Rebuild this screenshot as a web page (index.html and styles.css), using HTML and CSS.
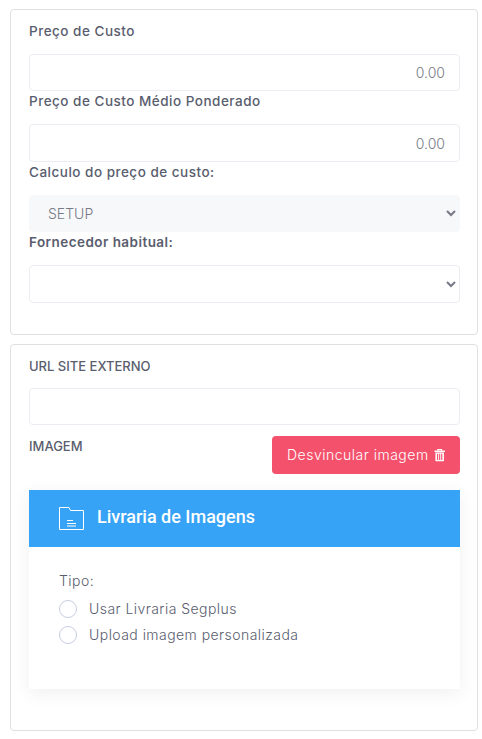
FILE: index.html
```html
<!DOCTYPE html>
<html lang="en">
<head>
  <meta charset="UTF-8" />
  <title>Produto</title>
  <link rel="stylesheet" href="styles.css">
</head>
<body>

  <div class="card card-cost">
    <label class="field-label">Preço de Custo</label>
    <input class="form-input num" type="text" value="0.00" />
    <label class="field-label">Preço de Custo Médio Ponderado</label>
    <input class="form-input num" type="text" value="0.00" />
    <label class="field-label">Calculo do preço de custo:</label>
    <select class="form-input form-select" disabled>
      <option>SETUP</option>
    </select>
    <label class="field-label strong">Fornecedor habitual:</label>
    <select class="form-input form-select">
      <option></option>
    </select>
  </div>

  <div class="card card-media">
    <label class="field-label caps">URL SITE EXTERNO</label>
    <input class="form-input" type="text" />
    <div class="image-row">
      <label class="field-label caps">IMAGEM</label>
      <button class="btn-danger">Desvincular imagem
        <svg class="icon-trash" viewBox="0 0 12 14" width="12" height="14">
          <path fill="none" stroke="#fff" stroke-width="1.2" d="M4 2.5V1.200h4v1.300" />
          <path fill="#fff" d="M0.500 2.200h11v1.500H0.500zM1.500 4.400h9v8.300a1 1 0 0 1-1 1h-7a1 1 0 0 1-1-1zM3.200 5.600v6.800h1.200V5.600zM5.400 5.600v6.800h1.200V5.600zM7.600 5.600v6.800h1.200V5.600z" fill-rule="evenodd" />
        </svg>
      </button>
    </div>

    <div class="library">
      <div class="library-head">
        <svg class="icon-folder" viewBox="0 0 25 23" width="25" height="23">
          <path fill="none" stroke="#fff" d="M0.500 0.500h9.500l1.500 3h13v19h-24z" />
          <path fill="none" stroke="#fff" d="M8 13.500h6M8 16.500h9M8 19h9" />
        </svg>
        <span class="library-title">Livraria de Imagens</span>
      </div>
      <div class="library-body">
        <div class="type-label">Tipo:</div>
        <label class="radio"><input type="radio" name="tipo" /><span class="mark"></span>Usar Livraria Segplus</label>
        <label class="radio"><input type="radio" name="tipo" /><span class="mark"></span>Upload imagem personalizada</label>
      </div>
    </div>
  </div>

</body>
</html>
```

FILE: styles.css
```css
* { box-sizing: border-box; }
body {
  margin: 0;
  padding: 9px 4px 8px 10px;
  background: #fff;
  color: #595d6e;
  font-family: Inter, "Noto Sans", sans-serif;
  font-size: 14px;
  letter-spacing: 0.45px;
}
.card {
  background: #fff;
  border: 1px solid #e0e0e0;
  border-radius: 4px;
  padding: 11px 17px 0 18px;
}
.card-cost { height: 326px; margin-bottom: 9px; }
.card-media { height: 387px; }
.field-label {
  display: block;
  height: 20px;
  line-height: 20px;
  margin-bottom: 13px;
  font-size: 13.5px;
  font-weight: 500;
  letter-spacing: 0.5px;
  white-space: nowrap;
}
.field-label.strong { font-weight: 600; letter-spacing: 0.45px; }
.field-label.caps { font-size: 13px; letter-spacing: 0; margin-bottom: 12px; }
.form-input {
  display: block;
  width: 100%;
  height: 37.4px;
  padding: 0 14px;
  background: #fff;
  border: 1px solid #ebedf2;
  border-radius: 4px;
  color: #777a86;
  font-family: inherit;
  font-size: 14px;
  font-weight: 300;
  letter-spacing: 0;
  outline: none;
}
.num { text-align: right; }
.form-select:disabled { background: #f7f8fa; border-color: #f7f8fa; opacity: 1; color: #777a86; }
.image-row {
  display: flex;
  justify-content: space-between;
  align-items: flex-start;
  margin-top: 10.6px;
}
.btn-danger {
  display: flex;
  align-items: center;
  gap: 5px;
  width: 188px;
  height: 38px;
  padding: 0 15px;
  background: #f4516c;
  border: none;
  border-radius: 4px;
  color: #fff;
  font-family: inherit;
  font-size: 14px;
  font-weight: 300;
  letter-spacing: 0.5px;
  white-space: nowrap;
}
.library {
  margin-top: 16px;
  background: #fff;
  box-shadow: 0 4px 16px rgba(69, 65, 78, 0.08);
}
.library-head {
  display: flex;
  align-items: center;
  gap: 13px;
  height: 57px;
  padding-left: 30px;
  background: #36a3f7;
  color: #fff;
}
.library-title {
  margin-bottom: 3px;
  font-family: Roboto, sans-serif;
  font-size: 18px;
  font-weight: 500;
  letter-spacing: 0;
}
.library-body {
  height: 142px;
  padding: 24px 30px 0;
  font-weight: 300;
}
.type-label { height: 20px; line-height: 20px; margin-bottom: 9px; }
.radio {
  display: flex;
  align-items: center;
  gap: 12px;
  height: 18px;
  margin-bottom: 8px;
}
.radio input { display: none; }
.mark {
  width: 18px;
  height: 18px;
  border: 1px solid #c8cedf;
  border-radius: 50%;
  background: #fff;
}
```
